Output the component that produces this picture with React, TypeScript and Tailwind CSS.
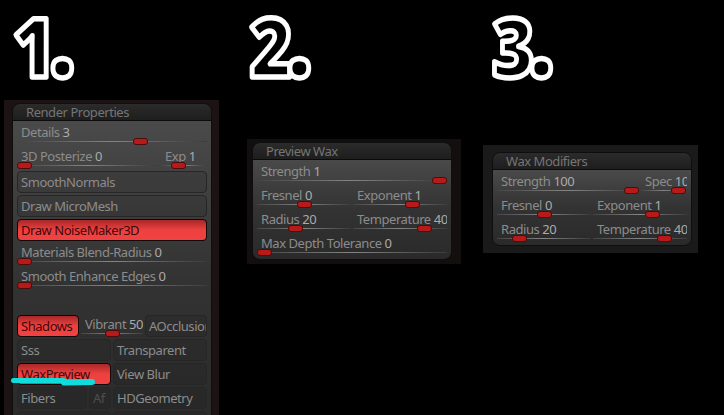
const font = "[font-family:'Noto_Sans',sans-serif]";

function Numeral({ digit, x }: { digit: string; x: number }) {
  return (
    <svg width="100" height="100" className="block">
      <text
        transform={`translate(${x} 77) scale(0.88 1)`}
        fontFamily="'Open Sans', sans-serif"
        fontWeight="800"
        fontSize="82"
        fill="black"
        stroke="white"
        strokeWidth="5.5"
        strokeLinejoin="round"
      >
        {digit}
        <tspan fontSize="105" dx="-7">.</tspan>
      </text>
    </svg>
  );
}

function Slider({ label, value, at }: { label: string; value: string; at: number }) {
  return (
    <div className="relative h-[22px] min-w-0 flex-1">
      <div className="h-[18px] overflow-hidden whitespace-nowrap pl-[4px] text-[13px] leading-[18px] tracking-[-0.45px] text-[#8c8c8c]">
        {label} <span className="text-[#ababab]">{value}</span>
      </div>
      <div className="absolute inset-x-0 top-[18px] h-px bg-linear-to-r from-[#444444] via-[#858585] to-[#3c3c3c]" />
      <div
        className="absolute top-[15px] h-[7px] w-[15px] rounded-[3px] border border-[#4a0d0d] bg-[#b81a1a]"
        style={{ left: at }}
      />
    </div>
  );
}

function Btn({ label, on, dim, w }: { label: string; on?: boolean; dim?: boolean; w?: string }) {
  const look = on
    ? "border-[#120404] bg-linear-to-b from-[#a92828] via-[#ef4040] to-[#f04242] text-[#3d0808]"
    : dim
      ? "border-[#262626] bg-[#00000014] text-[#4e4e4e]"
      : "border-[#262626] bg-[#00000014] text-[#8c8c8c]";
  return (
    <div
      className={`h-[22px] overflow-hidden whitespace-nowrap rounded-[4px] border pl-[3px] text-[13px] leading-[20px] tracking-[-0.45px] ${look} ${
        w ?? "min-w-0 flex-1"
      }`}
    >
      {label}
    </div>
  );
}

function Panel({ title, children }: { title: string; children: React.ReactNode }) {
  return (
    <div className="flex w-[200px] flex-col overflow-hidden rounded-[8px] border border-[#0e0e0e]">
      <div className="h-[17px] shrink-0 border-b border-[#0b0b0b] bg-linear-to-b from-[#2b2b2b] to-[#1e1e1e] pl-[13px] text-[13px] leading-[17px] tracking-[-0.45px] text-[#757575]">
        {title}
      </div>
      <div className="flex flex-1 flex-col gap-[2px] bg-linear-to-b from-[#4a4a4a] via-[#333333] to-[#2a2a2a] px-[4px] pt-[2px] pb-[3px]">
        {children}
      </div>
    </div>
  );
}

function Row({ children }: { children: React.ReactNode }) {
  return <div className="flex gap-[2px]">{children}</div>;
}

export default function App() {
  return (
    <div className={`relative flex h-[415px] w-[724px] overflow-hidden bg-black ${font}`}>
      <div className="ml-[4px] w-[215px] shrink-0">
        <Numeral digit="1" x={9} />
        <div className="h-[315px] overflow-hidden bg-[#1c1414] pt-[3px] pl-[8px]">
          <Panel title="Render Properties">
            <Row>
              <Slider label="Details" value="3" at={116} />
            </Row>
            <Row>
              <Slider label="3D Posterize" value="0" at={0} />
              <div className="w-[46px] shrink-0">
                <Slider label="Exp" value="1" at={10} />
              </div>
            </Row>
            <Btn label="SmoothNormals" w="w-full" />
            <Btn label="Draw MicroMesh" w="w-full" />
            <Btn label="Draw NoiseMaker3D" on w="w-full" />
            <Row>
              <Slider label="Materials Blend-Radius" value="0" at={0} />
            </Row>
            <Row>
              <Slider label="Smooth Enhance Edges" value="0" at={0} />
            </Row>
            <div className="h-[22px]" />
            <Row>
              <Btn label="Shadows" on w="w-[62px]" />
              <div className="w-[62px] shrink-0">
                <Slider label="Vibrant" value="50" at={24} />
              </div>
              <Btn label="AOcclusion" w="w-[62px]" />
            </Row>
            <Row>
              <Btn label="Sss" />
              <Btn label="Transparent" />
            </Row>
            <Row>
              <Btn label="WaxPreview" on />
              <Btn label="View Blur" />
            </Row>
            <Row>
              <Btn label="Fibers" w="w-[70px]" />
              <Btn label="Af" dim w="w-[22px]" />
              <Btn label="HDGeometry" w="w-[94px]" />
            </Row>
            <Row>
              <Btn label="" />
              <Btn label="" />
            </Row>
          </Panel>
        </div>
      </div>

      <div className="ml-[28px] w-[214px] shrink-0">
        <Numeral digit="2" x={3} />
        <div className="mt-[39px] bg-[#140f0f] pt-[3px] pr-[9px] pb-[4px] pl-[5px]">
          <Panel title="Preview Wax">
            <Row>
              <Slider label="Strength" value="1" at={175} />
            </Row>
            <Row>
              <Slider label="Fresnel" value="0" at={40} />
              <Slider label="Exponent" value="1" at={52} />
            </Row>
            <Row>
              <Slider label="Radius" value="20" at={31} />
              <Slider label="Temperature" value="40" at={64} />
            </Row>
            <Row>
              <Slider label="Max Depth Tolerance" value="0" at={0} />
            </Row>
          </Panel>
        </div>
      </div>

      <div className="ml-[22px] w-[215px] shrink-0">
        <Numeral digit="3" x={9} />
        <div className="mt-[45px] bg-[#1a1a1a] pt-[7px] pr-[6px] pb-[7px] pl-[9px]">
          <Panel title="Wax Modifiers">
            <Row>
              <Slider label="Strength" value="100" at={127} />
              <div className="w-[46px] shrink-0">
                <Slider label="Spec" value="100" at={30} />
              </div>
            </Row>
            <Row>
              <Slider label="Fresnel" value="0" at={40} />
              <Slider label="Exponent" value="1" at={52} />
            </Row>
            <Row>
              <Slider label="Radius" value="20" at={15} />
              <Slider label="Temperature" value="40" at={64} />
            </Row>
          </Panel>
        </div>
      </div>

      {/* teal marker scribble under WaxPreview */}
      <svg width="100" height="20" className="absolute top-[372px] left-0" fill="none">
        <path d="M13.5 8.5 L64 8.5" stroke="#10dcdc" strokeWidth="5" strokeLinecap="round" />
        <path d="M64 10.5 L92 10" stroke="#10dcdc" strokeWidth="6" strokeLinecap="round" />
      </svg>
    </div>
  );
}
